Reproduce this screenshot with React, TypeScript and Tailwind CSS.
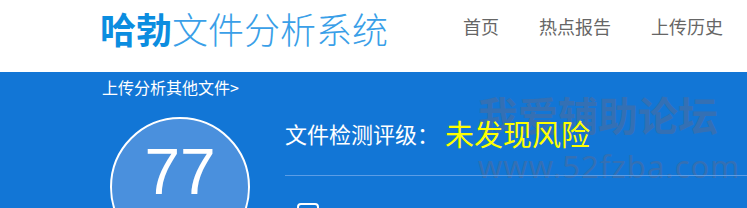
import React from "react";

export default function App() {
  return (
    <div className="w-[747px] h-[208px] overflow-hidden bg-white" style={{ fontFamily: '"Noto Sans CJK SC", "Noto Sans", sans-serif' }}>
      <header className="h-[72px] flex items-start justify-between pl-[100px] pr-[24px]">
        <div className="mt-[7px] text-[36px] leading-[42px] whitespace-nowrap">
          <span className="font-bold text-[#0b8de0]">哈勃</span>
          <span className="font-light text-[#3a9fe8]">文件分析系统</span>
        </div>
        <nav className="mt-[13px] flex gap-[40px] text-[18px] leading-[26px] text-[#666666]">
          <span>首页</span>
          <span>热点报告</span>
          <span>上传历史</span>
        </nav>
      </header>
      <section className="relative bg-[#1276d6] h-[400px]">
        <div className="absolute z-0 left-[478px] top-[18px] pointer-events-none select-none text-[#3470b4]">
          <div className="text-[40px] leading-[48px] font-bold whitespace-nowrap">我爱辅助论坛</div>
          <div className="mt-[10px] text-[31px] leading-[36px] tracking-[1px] whitespace-nowrap" style={{ fontFamily: '"Noto Sans", sans-serif' }}>www.52fzba.com</div>
        </div>
        <div className="relative z-10">
          <div className="pl-[102px] pt-[5px] text-[16px] leading-[20px] text-white">上传分析其他文件&gt;</div>
          <div className="flex">
            <div className="ml-[110px] mt-[20px] w-[140px] h-[140px] rounded-full border-[2px] border-white bg-[#4a90dd] flex flex-col items-center shrink-0">
              <div className="mt-[18px] text-[64px] leading-[70px] text-white" style={{ fontFamily: '"Liberation Sans", Arial, sans-serif' }}>77</div>
              <div className="mt-[1px] text-[14px] leading-[18px] text-white">安全评分</div>
            </div>
            <div className="ml-[35px] flex-1 pt-[18px]">
              <div className="flex items-center h-[36px]">
                <span className="text-[22px] leading-[30px] text-white">文件检测评级：</span>
                <span className="ml-[6px] text-[29px] leading-[36px] text-[#ffff00]">未发现风险</span>
              </div>
              <div className="mt-[24px] h-px bg-[#5b9de6]"></div>
              <div className="mt-[27px] ml-[12px] w-[22px] h-[16px] rounded-[4px] border-[2px] border-white"></div>
            </div>
          </div>
        </div>
      </section>
    </div>
  );
}
